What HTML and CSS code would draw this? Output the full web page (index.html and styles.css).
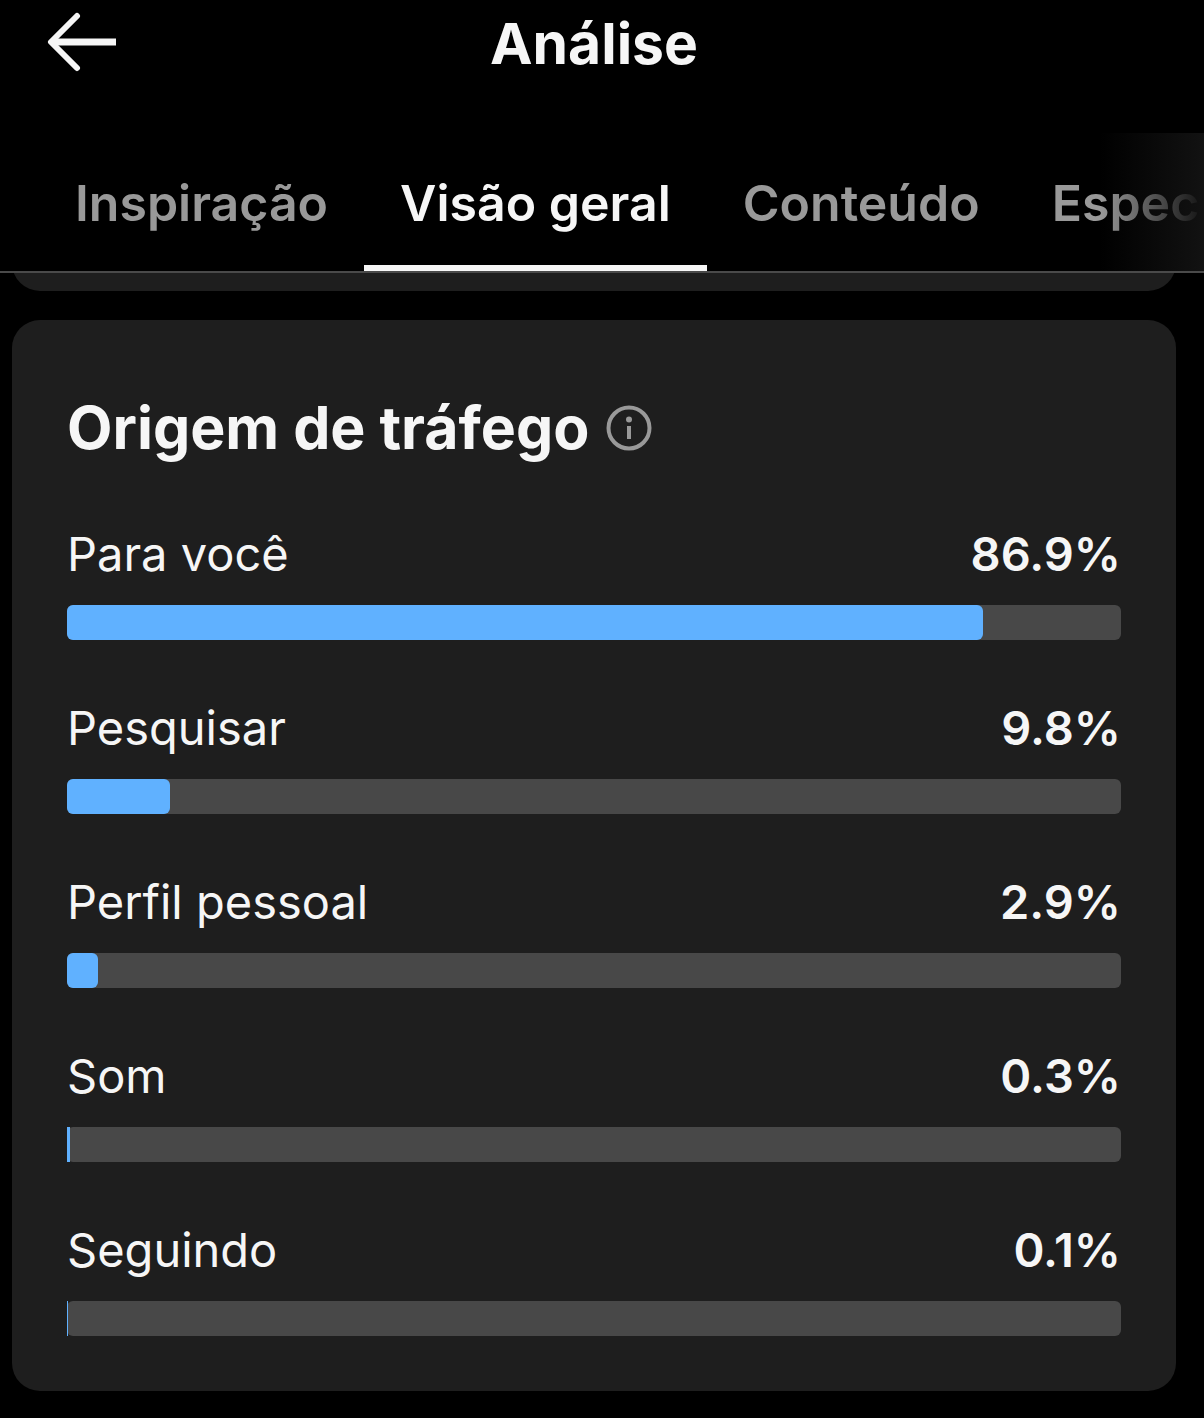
FILE: index.html
```html
<!DOCTYPE html>
<html lang="pt-BR">
<head>
    <meta charset="UTF-8">
    <meta name="viewport" content="width=device-width, initial-scale=1.0">
    <title>Análise</title>
    <link rel="stylesheet" href="styles.css">
</head>
<body>

<header class="header">
    <button class="back-button" type="button" aria-label="Voltar">
        <svg class="back-icon" viewBox="0 0 70 60" fill="none" stroke="currentColor" stroke-width="7" stroke-linejoin="round">
            <path d="M30 4 L4 30 L30 56" stroke-linecap="round" stroke-width="6"/>
            <path d="M6 30 H69"/>
        </svg>
    </button>
    <h1>Análise</h1>
</header>

<nav class="tabs">
    <button class="tab" type="button">Inspiração</button>
    <button class="tab active" type="button">Visão geral</button>
    <button class="tab" type="button">Conteúdo</button>
    <button class="tab" type="button">Espec</button>
</nav>

<main class="content">
    <div class="previous">
        <div class="previous-card"></div>
    </div>

    <section class="card">
        <div class="card-title">
            <h2>Origem de tráfego</h2>
            <button class="info-button" type="button" aria-label="Informações">
                <svg class="info-icon" viewBox="0 0 46 46" fill="none" stroke="currentColor">
                    <circle cx="23" cy="23" r="20.5" stroke-width="4"/>
                    <circle cx="23" cy="14.5" r="3" fill="currentColor" stroke="none"/>
                    <path d="M23 21 V34" stroke-width="4"/>
                </svg>
            </button>
        </div>

        <ul class="sources">
            <li class="source">
                <div class="source-text"><span>Para você</span><strong>86.9%</strong></div>
                <div class="track"><div class="fill" style="width: 86.9%"></div></div>
            </li>
            <li class="source">
                <div class="source-text"><span>Pesquisar</span><strong>9.8%</strong></div>
                <div class="track"><div class="fill" style="width: 9.8%"></div></div>
            </li>
            <li class="source">
                <div class="source-text"><span>Perfil pessoal</span><strong>2.9%</strong></div>
                <div class="track"><div class="fill" style="width: 2.9%"></div></div>
            </li>
            <li class="source">
                <div class="source-text"><span>Som</span><strong>0.3%</strong></div>
                <div class="track"><div class="fill thin" style="width: 0.3%"></div></div>
            </li>
            <li class="source">
                <div class="source-text"><span>Seguindo</span><strong>0.1%</strong></div>
                <div class="track"><div class="fill thin" style="width: 0.1%"></div></div>
            </li>
        </ul>
    </section>
</main>

</body>
</html>
```

FILE: styles.css
```css
* {
    box-sizing: border-box;
}

body {
    font-family: "Inter", "Liberation Sans", Arial, sans-serif;
    margin: 0;
    background-color: #000;
    color: #f6f6f6;
}

button {
    background: none;
    border: none;
    padding: 0;
    font: inherit;
    color: inherit;
    cursor: pointer;
}

h1, h2 {
    margin: 0;
    font-weight: 700;
    line-height: 72px;
}

h1 {
    font-size: 57px;
}

h2 {
    font-size: 59px;
}

.header {
    display: grid;
    grid-template-columns: 1fr auto 1fr;
    align-items: center;
    padding: 8px 63px 53px 47px;
}

.back-button {
    justify-self: start;
    padding-bottom: 4px;
}

.back-icon {
    display: block;
    width: 70px;
    height: 60px;
}

.tabs {
    position: relative;
    display: flex;
    padding-left: 39px;
    border-bottom: 2px solid #4a4a4a;
    overflow: hidden;
}

/* fade over the tabs that run off the right side */
.tabs::after {
    content: "";
    position: absolute;
    top: 0;
    right: 0;
    bottom: 0;
    width: 104px;
    background: linear-gradient(to right, rgba(18, 18, 18, 0), #121212);
}

.tab {
    flex: none;
    padding: 40px 36px 32px;
    border-bottom: 6px solid transparent;
    font-size: 50px;
    font-weight: 600;
    line-height: 60px;
    white-space: nowrap;
    color: #999;
}

.tab.active {
    color: #f6f6f6;
    border-bottom-color: #f6f6f6;
}

.content {
    padding: 0 28px 27px 12px;
}

/* bottom edge of the card scrolled under the tabs */
.previous {
    display: flex;
    align-items: flex-end;
    height: 18px;
    margin-bottom: 29px;
    overflow: hidden;
}

.previous-card {
    flex: 1;
    height: 60px;
    background-color: #1e1e1e;
    border-radius: 28px;
}

.card {
    padding: 72px 55px 55px;
    background-color: #1e1e1e;
    border-radius: 28px;
}

.card-title {
    display: flex;
    align-items: center;
    gap: 17px;
    margin-bottom: 60px;
}

.info-button {
    color: #999;
}

.info-icon {
    display: block;
    width: 46px;
    height: 46px;
}

.sources {
    display: flex;
    flex-direction: column;
    gap: 58px;
    margin: 0;
    padding: 0;
    list-style: none;
}

.source-text {
    display: flex;
    justify-content: space-between;
    margin-bottom: 21px;
    font-size: 47px;
    line-height: 60px;
}

.source-text strong {
    font-weight: 600;
}

.track {
    height: 35px;
    background-color: #484848;
    border-radius: 6px;
}

.fill {
    height: 100%;
    background-color: #60b1ff;
    border-radius: 6px;
}

.fill.thin {
    border-radius: 0;
}
```
